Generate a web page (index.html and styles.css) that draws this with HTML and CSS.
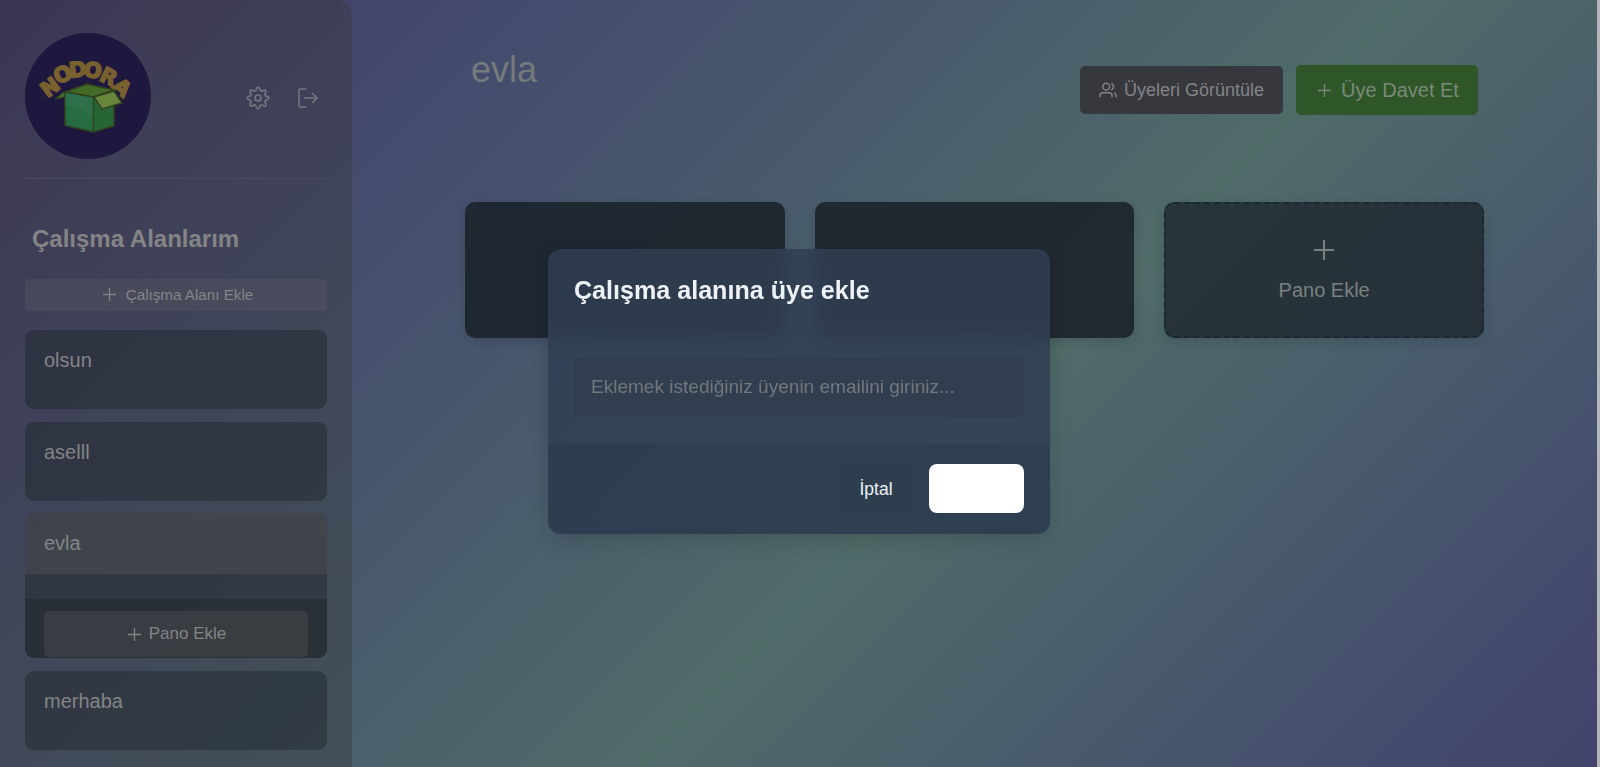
FILE: index.html
```html
<!DOCTYPE html>
<html lang="tr">
<head>
<meta charset="utf-8">
<title>Nodora</title>
<link rel="stylesheet" href="styles.css">
</head>
<body>
<div class="app">
  <aside class="sidebar">
    <header class="brand">
      <svg class="logo" viewBox="0 0 126 126">
        <circle cx="63" cy="63" r="63" fill="#1e183f"/>
        <text class="logo-text" x="22.4 32.7 44.7 58.1 73.3 86.2" y="65.3 51.7 44.8 43.3 46.8 54.600" rotate="-37 -25 -6 8 26 42">NODORA</text>
        <path d="M30 66 40 58 40 64Z" fill="#47692c" stroke="#31401f"/>
        <path d="M40 59 62 51 89 57 69 64Z" fill="#446b26" stroke="#31401f" stroke-width="1.4"/>
        <path d="M40 59 68.500 64V99L40 92.500Z" fill="#276b40" stroke="#31401f" stroke-width="1.400"/>
        <path d="M40.700 60 68 65V84Q62 80 55 76 48 71 40.700 74Z" fill="#2d7049"/>
        <path d="M68.500 64 89 58V93L68.500 99Z" fill="#266635" stroke="#31401f" stroke-width="1.400"/>
        <path d="M69 64 89 58 97 70 77 76Z" fill="#67863c" stroke="#31401f" stroke-width="1.400"/>
      </svg>
      <nav class="tools">
        <svg class="gear" viewBox="0 0 24 24"><circle cx="12" cy="12" r="3"/><path d="M12 1.200c1.300 0 1.500 1.200 1.900 2.600.3 1.200 1.500 1.700 2.600 1.100 1.300-.7 2.300-1.400 3.200-.5.900.9.200 1.900-.5 3.200-.6 1.100-.1 2.200 1.100 2.500 1.400.4 2.500.6 2.500 1.900s-1.100 1.500-2.500 1.900c-1.200.3-1.700 1.500-1.100 2.600.7 1.300 1.400 2.300.5 3.200-.9.900-1.900.2-3.200-.5-1.100-.6-2.300-.1-2.600 1.100-.4 1.400-.6 2.500-1.900 2.500s-1.500-1.100-1.900-2.500c-.3-1.200-1.500-1.700-2.600-1.100-1.300.7-2.300 1.400-3.200.5-.9-.9-.2-1.900.5-3.200.6-1.100.1-2.300-1.100-2.600C2.400 13.500 1.200 13.300 1.200 12s1.200-1.500 2.500-1.900c1.200-.3 1.700-1.400 1.100-2.500-.7-1.300-1.400-2.300-.5-3.200.9-.9 1.900-.2 3.200.5 1.100.6 2.300.1 2.600-1.100.4-1.400.6-2.600 1.900-2.600Z"/></svg>
        <svg class="logout" viewBox="0 0 20 20"><path d="M8 1H3Q1 1 1 3V17Q1 19 3 19H8M6.500 10H19M14.500 5.500 19 10 14.500 14.500"/></svg>
      </nav>
    </header>
    <h2 class="side-title">Çalışma Alanlarım</h2>
    <button class="add-space"><svg class="plus" viewBox="0 0 14 14"><path d="M7 0V14M0 7H14"/></svg>Çalışma Alanı Ekle</button>
    <ul class="spaces">
      <li class="space">olsun</li>
      <li class="space">aselll</li>
      <li class="space open">
        <div class="space-head">evla</div>
        <div class="space-body"><button class="add-board"><svg class="plus" viewBox="0 0 14 14"><path d="M7 0V14M0 7H14"/></svg>Pano Ekle</button></div>
      </li>
      <li class="space">merhaba</li>
    </ul>
  </aside>
  <main class="main">
    <header class="top">
      <h1 class="title">evla</h1>
      <div class="actions">
        <button class="members"><svg class="users" viewBox="0 0 20 17"><circle cx="8" cy="4.800" r="3.800"/><path d="M1 16.500V15Q1 11.500 4.500 11.500H11Q14.500 11.500 14.500 15V16.500M13.500 1.200Q16 2 16 4.800T13.500 8.400M16.500 11.700Q19 12.500 19 15V16.500"/></svg>Üyeleri Görüntüle</button>
        <button class="invite"><svg class="plus" viewBox="0 0 14 14"><path d="M7 0V14M0 7H14"/></svg>Üye Davet Et</button>
      </div>
    </header>
    <section class="boards">
      <div class="board"></div>
      <div class="board"></div>
      <div class="board new"><svg class="plus" viewBox="0 0 20 20"><path d="M10 0V20M0 10H20"/></svg>Pano Ekle</div>
    </section>
  </main>
</div>
<div class="modal">
  <h3 class="modal-title">Çalışma alanına üye ekle</h3>
  <div class="modal-body"><input class="email" type="email" placeholder="Eklemek istediğiniz üyenin emailini giriniz..."></div>
  <footer class="modal-foot"><button class="cancel">İptal</button><button class="submit" aria-label="Ekle"></button></footer>
</div>
</body>
</html>
```
FILE: styles.css
```css
* { box-sizing: border-box; margin: 0; padding: 0; }
body {
  height: 767px;
  overflow: hidden;
  font-family: "Liberation Sans", Arial, sans-serif;
  color: #838486;
  background: #b3b5bb;
}
button, input { font-family: inherit; border: 0; color: inherit; }
svg { fill: none; stroke: currentColor; flex: none; }
.app {
  display: flex;
  width: 1597px;
  height: 767px;
  background: linear-gradient(135deg, #3e3065 0%, #3f3a69 5%, #43466d 16%, #47566d 36%, #4f6b68 59.5%, #47576d 80%, #42446c 98%);
}
.sidebar {
  width: 352px;
  height: 790px;
  padding: 33px 25px 0;
  border-radius: 0 16px 0 0;
  background: rgba(58, 58, 58, .4);
}
.brand {
  display: flex;
  justify-content: space-between;
  height: 146px;
  border-bottom: 1px solid #484a61;
}
.logo { width: 126px; height: 126px; stroke: none; }
.logo-text {
  font: 900 21px "DejaVu Sans", sans-serif;
  fill: #79602f;
  stroke: #79602f;
  stroke-width: 1.6;
}
.tools { display: flex; align-items: center; gap: 28px; height: 130px; padding-right: 9px; color: #74757d; }
.gear { width: 24px; height: 24px; stroke-width: 1.7; }
.logout { width: 20px; height: 20px; stroke-width: 1.6; stroke-linecap: round; }
.side-title { padding: 45px 0 0 7px; font-size: 24px; line-height: 29px; color: #848484; }
.add-space {
  display: flex;
  justify-content: center;
  align-items: center;
  gap: 10px;
  width: 302px;
  height: 32px;
  margin-top: 26px;
  padding: 0 0 1px 4px;
  border-radius: 4px;
  font-size: 15.2px;
  background: rgba(88, 88, 100, .4);
}
.plus { width: 13px; height: 13px; stroke-width: 1.4; }
.spaces { display: flex; flex-direction: column; gap: 13px; margin-top: 19px; list-style: none; }
.space {
  width: 302px;
  height: 79px;
  padding: 18px 19px;
  border-radius: 9px;
  font-size: 20px;
  line-height: 24px;
  background: rgba(26, 32, 38, .4);
}
.open { height: 145px; margin-top: -1px; padding: 0; overflow: hidden; }
.space-head { height: 61px; padding: 18px 19px; background: rgba(88, 88, 88, .4); }
.space-body { height: 59px; margin-top: 25px; padding: 12px 19px; background: rgba(31, 36, 38, .4); }
.add-board {
  display: flex;
  justify-content: center;
  align-items: center;
  gap: 8px;
  width: 264px;
  height: 46px;
  padding-left: 2px;
  border-radius: 5px;
  font-size: 17px;
  background: rgba(88, 87, 90, .35);
}
.main { flex: 1; padding: 48px 112px 0 113px; }
.top { display: flex; justify-content: space-between; height: 154px; }
.title { padding-left: 6px; font-size: 36px; font-weight: 400; line-height: 44px; color: #757a7b; }
.actions { display: flex; align-items: center; gap: 13px; height: 50px; margin: 17px 7px 0 0; }
.members, .invite { display: flex; align-items: center; justify-content: center; border-radius: 5px; }
.members { gap: 7px; width: 203px; height: 48px; font-size: 18px; background: #37383e; }
.invite { gap: 10px; width: 182px; height: 50px; padding-left: 3px; font-size: 20px; background: #2e5628; color: #7b897a; }
.users { width: 18px; height: 16px; stroke-width: 1.6; }
.boards { display: grid; grid-template-columns: repeat(3, 1fr); gap: 30px; width: 1019px; }
.board {
  height: 136px;
  border-radius: 10px;
  background: rgba(26, 33, 40, .88);
  box-shadow: 0 4px 12px rgba(0, 0, 0, .12);
}
.new {
  display: flex;
  flex-direction: column;
  align-items: center;
  gap: 19px;
  padding-top: 36px;
  border: 2px dashed #1c2731;
  font-size: 20px;
  color: #7b8083;
  background: rgba(28, 37, 44, .78);
}
.new .plus { width: 20px; height: 20px; stroke-width: 2; }
.modal {
  position: absolute;
  left: 548px;
  top: 249px;
  display: flex;
  flex-direction: column;
  width: 502px;
  height: 285px;
  border-radius: 13px;
  overflow: hidden;
  background: rgba(48, 62, 82, .85);
  backdrop-filter: blur(10px);
  box-shadow: 0 6px 20px rgba(0, 0, 0, .14);
}
.modal-title { padding: 26px 26px 0; font-size: 25.1px; line-height: 30px; color: #edf2f6; }
.modal-body { flex: 1; padding: 52px 26px 0; }
.email {
  width: 450px;
  height: 60px;
  padding: 0 17px;
  border-radius: 8px;
  font-size: 19.05px;
  background: #313e50;
}
.email::placeholder { color: #73777c; opacity: 1; }
.modal-foot {
  display: flex;
  justify-content: flex-end;
  gap: 16px;
  height: 91px;
  padding: 21px 26px;
  background: rgba(44, 60, 78, .6);
}
.cancel, .submit { height: 49px; border-radius: 8px; }
.cancel { width: 74px; padding-top: 1px; font-size: 17.5px; color: #edf2f6; background: #2f3e4f; }
.submit { width: 95px; background: #fff; }
```
